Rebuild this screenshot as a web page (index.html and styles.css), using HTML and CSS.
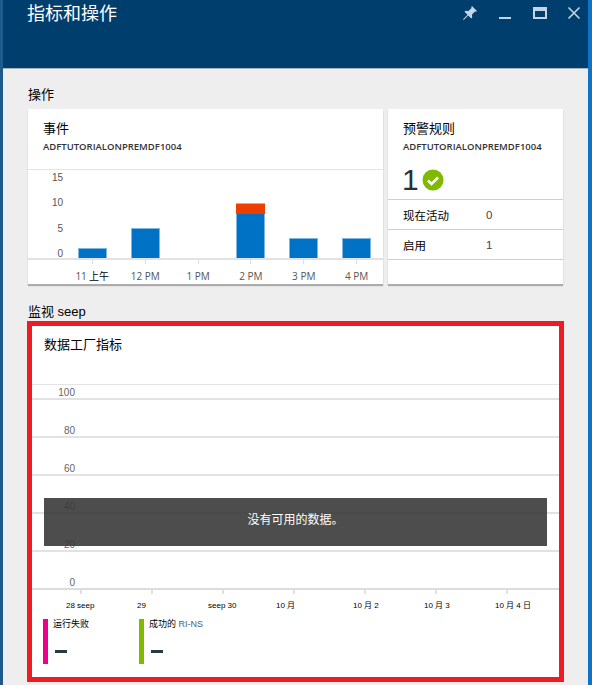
FILE: index.html
```html
<!DOCTYPE html>
<html lang="zh-CN">
<head>
  <meta charset="UTF-8">
  <title>指标和操作</title>
  <link rel="stylesheet" href="styles.css">
</head>
<body>
  <div class="blade">
    <header class="blade-head">
      <h1>指标和操作</h1>
      <div class="blade-tools">
        <svg class="tool" viewBox="0 0 16 16" width="16" height="16"><path d="M10 1l5 5-1 .8-1-.3-3 3 .2 3-1 1-3-3-4.200 4.300-.8.2.1-.9L5.500 9.700l-3-3 1-1 3 .2 3-3L9.300 2z" fill="#c5d5e4"/></svg>
        <svg class="tool" viewBox="0 0 16 16" width="16" height="16"><rect x="2" y="12" width="12" height="2" fill="#c5d5e4"/></svg>
        <svg class="tool" viewBox="0 0 16 16" width="16" height="16"><path d="M1 2h14v12H1zM3 6v6h10V6z" fill="#c5d5e4" fill-rule="evenodd"/></svg>
        <svg class="tool" viewBox="0 0 16 16" width="16" height="16"><path d="M1.500 2.500l11 11M12.500 2.500l-11 11" stroke="#c5d5e4" stroke-width="1.600" fill="none"/></svg>
      </div>
    </header>

    <main class="blade-body">
      <h2 class="section-title">操作</h2>
      <div class="ops-row">
        <section class="card events">
          <div class="card-head">
            <h3>事件</h3>
            <p class="sub">ADFTUTORIALONPREMDF1004</p>
          </div>
          <div class="bar-chart">
            <div class="y-labels"><span>15</span><span>10</span><span>5</span><span>0</span></div>
            <div class="bars">
              <div class="bar-col"><div class="bar blue h-1"></div></div>
              <div class="bar-col"><div class="bar blue h-5"></div></div>
              <div class="bar-col"></div>
              <div class="bar-col"><div class="bar red"></div><div class="bar blue h-8"></div></div>
              <div class="bar-col"><div class="bar blue h-3"></div></div>
              <div class="bar-col"><div class="bar blue h-3"></div></div>
            </div>
          </div>
          <div class="x-labels">
            <span>11 <b>上午</b></span><span>12 PM</span><span>1 PM</span><span>2 PM</span><span>3 PM</span><span>4 PM</span>
          </div>
        </section>

        <section class="card alerts">
          <div class="alert-top">
            <h3>预警规则</h3>
            <p class="sub">ADFTUTORIALONPREMDF1004</p>
            <div class="big-count">
              <span>1</span>
              <svg viewBox="0 0 22 22" width="22" height="22"><circle cx="11" cy="11" r="10.500" fill="#7fba00"/><path d="M6 11.500l3.500 3.500L16 8.500" stroke="#fff" stroke-width="2.600" fill="none"/></svg>
            </div>
          </div>
          <div class="alert-row"><span class="k">现在活动</span><span>0</span></div>
          <div class="alert-row"><span class="k">启用</span><span>1</span></div>
        </section>
      </div>

      <h2 class="section-title monitor">监视 seep</h2>
      <section class="metrics">
        <h3>数据工厂指标</h3>
        <div class="line-chart">
          <div class="grid-top"></div>
          <div class="grid-row"><span>100</span></div>
          <div class="grid-row"><span>80</span></div>
          <div class="grid-row"><span>60</span></div>
          <div class="grid-row"><span>40</span></div>
          <div class="grid-row"><span>20</span></div>
          <div class="grid-row axis">
            <span>0</span>
            <i></i><i></i><i></i><i></i><i></i><i></i><i></i>
          </div>
          <div class="no-data">没有可用的数据。</div>
        </div>
        <div class="date-labels">
          <span>28 seep</span><span>29</span><span>seep 30</span><span>10 月</span><span>10 月 2</span><span>10 月 3</span><span>10 月 4 日</span>
        </div>
        <div class="legend">
          <div class="legend-item pink"><span class="name">运行失败</span><span class="dash"></span></div>
          <div class="legend-item green"><span class="name">成功的 <em>RI-NS</em></span><span class="dash"></span></div>
        </div>
      </section>
    </main>
  </div>
</body>
</html>
```

FILE: styles.css
```css
html, body {
  margin: 0;
  padding: 0;
  height: 685px;
  overflow: hidden;
}
body {
  background-color: #eee;
  color: #000;
  font-family: "Liberation Sans", "Noto Sans CJK SC", sans-serif;
}
h1, h2, h3, p {
  margin: 0;
  font-weight: normal;
}
.blade {
  height: 685px;
  border-right: 4px solid #0e72c6;
  border-left: 3px solid #1f5a8c;
  background-color: #eee;
}
.blade-head {
  height: 68px;
  background-color: #003e6e;
  border-bottom: 1px solid #a9b4bd;
  display: flex;
  justify-content: space-between;
  padding: 0 5px 0 24px;
  color: #fff;
}
.blade-head h1 {
  font-size: 18px;
  line-height: 29px;
  color: #fff;
}
.blade-tools {
  display: flex;
  gap: 19px;
  padding-top: 5px;
}
.tool {
  display: block;
}
.blade-body {
  padding: 17px 24px 0 25px;
}
.section-title {
  font-size: 13px;
  line-height: 17px;
  margin-bottom: 6px;
}
.ops-row {
  display: flex;
  gap: 5px;
  height: 175px;
}
.card {
  background: white;
  box-shadow: 0 2px 1px rgba(0, 0, 0, 0.28);
}
.events {
  width: 355px;
  display: flex;
  flex-direction: column;
}
.card-head {
  height: 61px;
  padding: 11px 15px 0;
  box-sizing: border-box;
  border-bottom: 1px solid #e4e4e4;
}
.card h3 {
  font-size: 13px;
  line-height: 18px;
}
.sub {
  font-family: "Open Sans", sans-serif;
  font-size: 9.500px;
  font-weight: 600;
  line-height: 12px;
  color: #333;
  margin-top: 3px;
  white-space: nowrap;
}
.bar-chart {
  position: relative;
  height: 88px;
  border-bottom: 2px solid #e2e2e2;
}
.y-labels {
  position: absolute;
  left: 0;
  top: 2px;
  width: 35px;
  text-align: right;
  font-size: 10px;
  color: #555;
  display: flex;
  flex-direction: column;
  gap: 13.300px;
  line-height: 12px;
}
.bars {
  display: flex;
  height: 88px;
  padding-left: 38px;
  box-sizing: border-box;
}
.bar-col {
  width: 53.300px;
  display: flex;
  flex-direction: column;
  justify-content: flex-end;
  align-items: center;
}
.bar {
  width: 29px;
  box-sizing: border-box;
}
.bar.blue {
  background-color: #0072c6;
  border: 1px solid #7db8e4;
  border-bottom: none;
}
.bar.red {
  height: 11px;
  background-color: #ec3f00;
  border-top: 1px solid #f5a283;
}
.h-1 { height: 10px; }
.h-3 { height: 20px; }
.h-5 { height: 30px; }
.h-8 { height: 44px; border-top: none !important; }
.x-labels {
  display: flex;
  padding-left: 38px;
  font-family: "Open Sans", sans-serif;
  font-size: 10px;
  line-height: 12px;
  color: #555;
}
.x-labels span {
  width: 53.300px;
  text-align: center;
}
.x-labels span::before {
  content: "";
  display: block;
  width: 1px;
  height: 4px;
  background-color: #ddd;
  margin: 0 auto 6px;
}
.x-labels b {
  color: #000;
  font-weight: normal;
}
.alerts {
  width: 175px;
}
.alert-top {
  height: 91px;
  padding: 11px 15px 0;
  box-sizing: border-box;
  border-bottom: 1px solid #cfcfcf;
}
.big-count {
  display: flex;
  align-items: center;
  gap: 3px;
  font-size: 30px;
  line-height: 30px;
  color: #2b2f36;
  margin: 12px 0 0 -1px;
}
.alert-row {
  height: 30px;
  box-sizing: border-box;
  border-bottom: 1px solid #cfcfcf;
  display: flex;
  align-items: center;
  padding-left: 15px;
  font-size: 11.500px;
  color: #444;
}
.alert-row .k {
  width: 83px;
  color: #000;
}
.monitor {
  margin-top: 19px;
  margin-bottom: 1px;
}
.metrics {
  margin-left: -1px;
  width: 537px;
  height: 361px;
  box-sizing: border-box;
  background: white;
  border: 5px solid #ed1c24;
  padding-top: 10px;
}
.metrics h3 {
  font-size: 13px;
  line-height: 18px;
  margin-left: 12px;
}
.line-chart {
  position: relative;
  margin-top: 30px;
}
.grid-top {
  height: 14px;
  border-top: 1px solid #e4e4e4;
  box-sizing: border-box;
}
.grid-row {
  height: 38px;
  border-top: 2px solid #e2e2e2;
  box-sizing: border-box;
  position: relative;
  font-size: 10px;
  color: #666;
}
.grid-row span {
  position: absolute;
  right: calc(100% - 43px);
  top: -13px;
  line-height: 12px;
}
.grid-row.axis {
  height: 6px;
  border-top-color: #dcdcdc;
  display: flex;
  gap: 69px;
  padding-left: 48px;
}
.axis i {
  width: 2px;
  height: 4px;
  background-color: #e2e2e2;
}
.no-data {
  position: absolute;
  left: 12px;
  right: 12px;
  top: 114px;
  height: 48px;
  line-height: 45px;
  text-align: center;
  color: #fff;
  font-size: 12px;
  background-color: rgba(58, 58, 58, 0.9);
}
.date-labels {
  display: grid;
  grid-template-columns: 71px 71px 68px 77px 71px 71px auto;
  font-size: 8px;
  line-height: 12px;
  padding-left: 34px;
  margin-top: 6px;
  white-space: nowrap;
}
.legend {
  display: flex;
  margin-top: 7px;
  margin-left: 11px;
}
.legend-item {
  width: 86px;
  height: 45px;
  border-left: 5px solid;
  padding-left: 5px;
  display: flex;
  flex-direction: column;
  font-size: 9px;
  white-space: nowrap;
}
.legend-item.pink { border-color: #ec008c; }
.legend-item.green { border-color: #7fba00; }
.legend-item .name {
  line-height: 12px;
  margin-top: -1px;
}
.legend-item em {
  font-style: normal;
  color: #46617a;
}
.dash {
  width: 12px;
  height: 3px;
  background-color: #2b3a42;
  margin: 20px 0 0 2px;
}
```
